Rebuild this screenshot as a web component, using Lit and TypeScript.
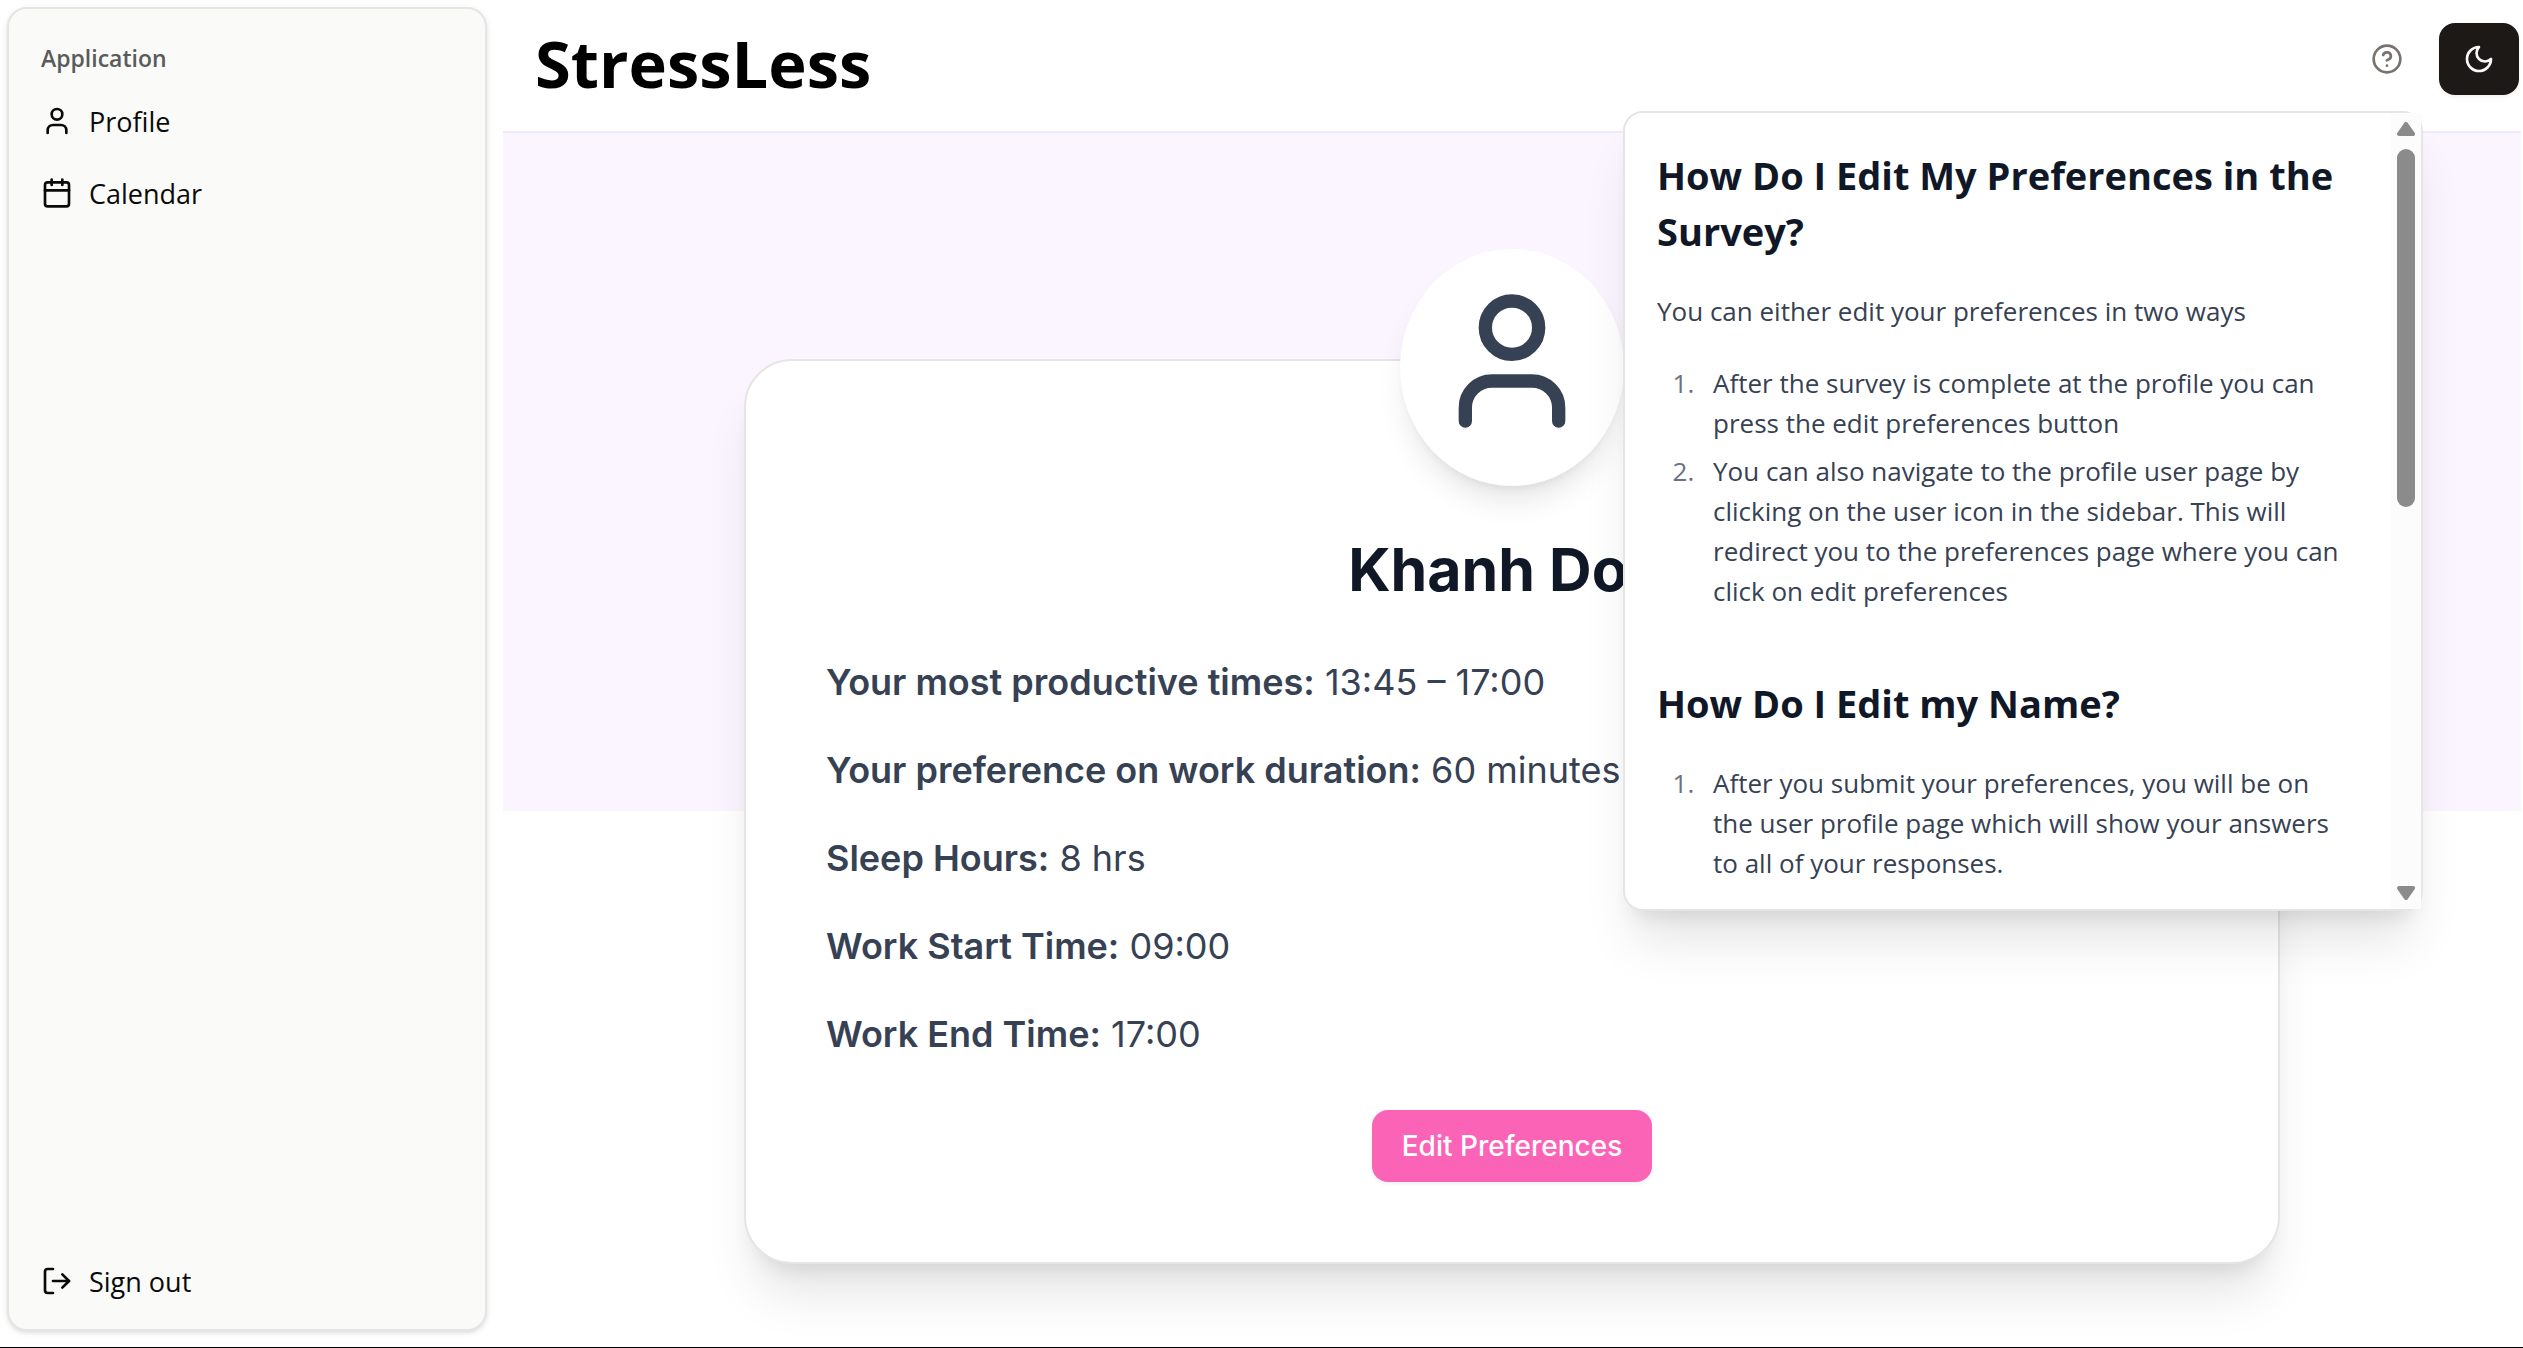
import { LitElement, html, css, svg } from "lit";
import { customElement, property, state } from "lit/decorators.js";

const ICONS = {
  user: svg`<path d="M19 21v-2a4 4 0 0 0-4-4H9a4 4 0 0 0-4 4v2"/><circle cx="12" cy="7" r="4"/>`,
  calendar: svg`<path d="M8 2v4"/><path d="M16 2v4"/><rect width="18" height="18" x="3" y="4" rx="2"/><path d="M3 10h18"/>`,
  logout: svg`<path d="M9 21H5a2 2 0 0 1-2-2V5a2 2 0 0 1 2-2h4"/><path d="m16 17 5-5-5-5"/><path d="M21 12H9"/>`,
  help: svg`<circle cx="12" cy="12" r="10"/><path d="M9.09 9a3 3 0 0 1 5.83 1c0 2-3 3-3 3"/><path d="M12 17h.01"/>`,
  moon: svg`<path d="M12 3a6 6 0 0 0 9 9 9 9 0 1 1-9-9Z"/>`,
};

@customElement("line-icon")
class LineIcon extends LitElement {
  static styles = css`
    :host { display: block; flex: none; width: 32px; height: 32px; }
    .glyph {
      display: block; width: 100%; height: 100%; fill: none; stroke: currentColor;
      stroke-width: 2; stroke-linecap: round; stroke-linejoin: round;
    }
  `;
  @property() name: keyof typeof ICONS = "user";
  render() {
    return html`<svg class="glyph" viewBox="0 0 24 24" aria-hidden="true">${ICONS[this.name]}</svg>`;
  }
}

@customElement("side-nav")
class SideNav extends LitElement {
  static styles = css`
    :host { display: flex; flex: none; width: 480px; box-sizing: border-box; }
    .panel {
      flex: 1; display: flex; flex-direction: column; padding: 16px;
      background: #fafaf9; border: 2px solid #e5e5e4; border-radius: 20px;
      box-shadow: 0 2px 6px rgba(0, 0, 0, 0.1), 0 2px 4px -2px rgba(0, 0, 0, 0.1);
    }
    .heading {
      margin: 0; padding: 2px 16px 0; font-size: 23px; line-height: 62px;
      font-weight: 600; color: #5b5b5a;
    }
    .items { display: flex; flex-direction: column; gap: 8px; margin: 0; padding: 0; list-style: none; }
    .item {
      display: flex; align-items: center; gap: 16px; box-sizing: border-box; width: 100%;
      padding: 0 16px; border: 0; background: none; font: inherit;
      font-size: 27px; line-height: 62px; color: #0a0a0a; text-decoration: none; cursor: pointer;
    }
    .label { padding-top: 2px; }
    .foot { margin-top: auto; }
  `;
  render() {
    return html`
      <nav class="panel" aria-label="Application">
        <h2 class="heading">Application</h2>
        <ul class="items">
          <li><a class="item" href="#profile"><line-icon name="user"></line-icon><span class="label">Profile</span></a></li>
          <li><a class="item" href="#calendar"><line-icon name="calendar"></line-icon><span class="label">Calendar</span></a></li>
        </ul>
        <div class="foot">
          <button class="item" type="button"><line-icon name="logout"></line-icon><span class="label">Sign out</span></button>
        </div>
      </nav>
    `;
  }
}

interface Topic { title: string; intro?: string; steps: string[]; }

const TOPICS: Topic[] = [
  {
    title: "How Do I Edit My Preferences in the Survey?",
    intro: "You can either edit your preferences in two ways",
    steps: [
      "After the survey is complete at the profile you can press the edit preferences button",
      "You can also navigate to the profile user page by clicking on the user icon in the sidebar. This will redirect you to the preferences page where you can click on edit preferences",
    ],
  },
  {
    title: "How Do I Edit my Name?",
    steps: [
      "After you submit your preferences, you will be on the user profile page which will show your answers to all of your responses.",
    ],
  },
];

@customElement("help-popover")
class HelpPopover extends LitElement {
  static styles = css`
    :host {
      display: flex; box-sizing: border-box; width: 800px; height: 800px;
      background: #fff; border: 2px solid #e5e5e5; border-radius: 20px;
      box-shadow: 0 40px 50px -10px rgba(0, 0, 0, 0.1), 0 16px 20px -12px rgba(0, 0, 0, 0.1);
    }
    .content {
      flex: 1; min-width: 0; display: flex; flex-direction: column; gap: 64px;
      padding: 34px 40px 0 32px; overflow-y: auto; scrollbar-width: none;
    }
    .topic { display: flex; flex-direction: column; gap: 32px; }
    .title { margin: 0; font-size: 38px; line-height: 56px; font-weight: 700; color: #101828; }
    .text { margin: 0; font-size: 26px; line-height: 40px; color: #364153; }
    .steps {
      display: flex; flex-direction: column; gap: 8px; margin: 0; padding: 0 0 0 44px;
      font-size: 26px; line-height: 40px; color: #364153;
    }
    .step { padding-left: 12px; }
    .step::marker { color: #6a7282; }
    .track {
      flex: none; width: 30px; display: flex; flex-direction: column; align-items: center;
      background: #fcfcfc; color: #8b8b8b;
    }
    .arrow {
      flex: none; display: flex; align-items: center; justify-content: center; box-sizing: border-box;
      width: 30px; height: 36px; padding: 0; border: 0; background: none; color: inherit;
    }
    .up { padding-bottom: 4px; }
    .down { padding-top: 4px; }
    .tip { display: block; width: 18px; height: 14px; fill: currentColor; stroke: currentColor; stroke-width: 4; stroke-linejoin: round; }
    .rail { flex: 1; width: 18px; }
    .thumb { border-radius: 9px; background: currentColor; }
  `;
  private page(direction: number) {
    this.renderRoot.querySelector(".content")?.scrollBy({ top: direction * 80 });
  }
  render() {
    const visible = 49.5;
    return html`
      <div class="content">
        ${TOPICS.map(
          (t) => html`
            <section class="topic">
              <h2 class="title">${t.title}</h2>
              ${t.intro ? html`<p class="text">${t.intro}</p>` : null}
              <ol class="steps">${t.steps.map((s) => html`<li class="step">${s}</li>`)}</ol>
            </section>
          `
        )}
      </div>
      <div class="track">
        <button class="arrow up" type="button" aria-label="Scroll up" @click=${() => this.page(-1)}>
          <svg class="tip" viewBox="0 0 18 14"><path d="M9 2 16 12H2Z"/></svg>
        </button>
        <div class="rail"><div class="thumb" style="height: ${visible}%"></div></div>
        <button class="arrow down" type="button" aria-label="Scroll down" @click=${() => this.page(1)}>
          <svg class="tip" viewBox="0 0 18 14"><path d="M9 12 16 2H2Z"/></svg>
        </button>
      </div>
    `;
  }
}

const PROFILE = {
  name: "Khanh Do",
  answers: [
    ["Your most productive times:", "13:45 – 17:00"],
    ["Your preference on work duration:", "60 minutes"],
    ["Sleep Hours:", "8 hrs"],
    ["Work Start Time:", "09:00"],
    ["Work End Time:", "17:00"],
  ],
};

@customElement("profile-card")
class ProfileCard extends LitElement {
  static styles = css`
    :host {
      display: flex; flex-direction: column; align-items: center; gap: 48px;
      box-sizing: border-box; width: 100%; max-width: 1536px; padding: 80px;
      background: #fff; border: 2px solid #e7e5e4; border-radius: 48px;
      box-shadow: 0 40px 50px -10px rgba(0, 0, 0, 0.1), 0 16px 20px -12px rgba(0, 0, 0, 0.1);
      font-family: Inter, "Liberation Sans", sans-serif;
    }
    .avatar {
      margin-top: -192px; padding: 32px 32px 45px; border-radius: 50%; background: #fff; color: #364153;
      box-shadow: 0 20px 30px -6px rgba(0, 0, 0, 0.1), 0 8px 12px -8px rgba(0, 0, 0, 0.1);
    }
    .portrait { width: 160px; height: 160px; }
    .name {
      margin: 0; padding-right: 48px; font-size: 59px; line-height: 72px;
      font-weight: 700; color: #101828;
    }
    .answers { align-self: stretch; display: flex; flex-direction: column; gap: 32px; }
    .answer { margin: 0; font-size: 36px; line-height: 56px; color: #364153; }
    .question { font-weight: 600; }
    .edit {
      height: 72px; padding: 0 30px; border: 0; border-radius: 16px; background: #fb64b6; color: #fff;
      font: inherit; font-size: 28px; font-weight: 500; line-height: 40px; cursor: pointer;
      box-shadow: 0 2px 4px rgba(0, 0, 0, 0.06);
    }
  `;
  render() {
    return html`
      <div class="avatar"><line-icon class="portrait" name="user"></line-icon></div>
      <h1 class="name">${PROFILE.name}</h1>
      <div class="answers">
        ${PROFILE.answers.map(([q, a]) => html`<p class="answer"><span class="question">${q}</span> ${a}</p>`)}
      </div>
      <button class="edit" type="button">Edit Preferences</button>
    `;
  }
}

@customElement("app-root")
class AppRoot extends LitElement {
  static styles = css`
    :host {
      display: flex; gap: 16px; box-sizing: border-box; min-height: 100vh;
      padding-right: 2px; border-bottom: 1px solid #000; background: #fff;
      font-family: "Open Sans", "Noto Sans", sans-serif;
    }
    .side { margin: 7px 0 16px 7px; }
    .page { flex: 1; min-width: 0; display: flex; flex-direction: column; }
    .bar {
      position: relative; z-index: 1; display: flex; align-items: center; gap: 36px;
      padding: 23px 2px 36px 32px; border-bottom: 2px solid #ede9fe; background: #fff;
    }
    .brand { flex: 1; margin: 0; padding-top: 8px; font-size: 65px; line-height: 64px; font-weight: 700; color: #000; }
    .help { padding: 0; border: 0; background: none; color: #79716b; cursor: pointer; }
    .theme {
      display: flex; align-items: center; justify-content: center; width: 80px; height: 72px;
      padding: 0; border: 0; border-radius: 16px; background: #1c1917; color: #fafaf9; cursor: pointer;
      box-shadow: 0 2px 4px rgba(0, 0, 0, 0.06);
    }
    .popover { position: absolute; top: 111px; right: 98px; }
    .main {
      flex: 1; display: flex; flex-direction: column; align-items: center; padding: 226px 32px 80px;
      background: linear-gradient(#faf5ff, #faf5ff) no-repeat 0 0 / 100% 678px;
    }
  `;
  @state() private helpOpen = true;
  render() {
    return html`
      <side-nav class="side"></side-nav>
      <div class="page">
        <header class="bar">
          <p class="brand">StressLess</p>
          <button class="help" type="button" aria-label="Help" @click=${() => (this.helpOpen = !this.helpOpen)}>
            <line-icon name="help"></line-icon>
          </button>
          <button class="theme" type="button" aria-label="Toggle theme"><line-icon name="moon"></line-icon></button>
          ${this.helpOpen ? html`<help-popover class="popover"></help-popover>` : null}
        </header>
        <main class="main"><profile-card></profile-card></main>
      </div>
    `;
  }
}
